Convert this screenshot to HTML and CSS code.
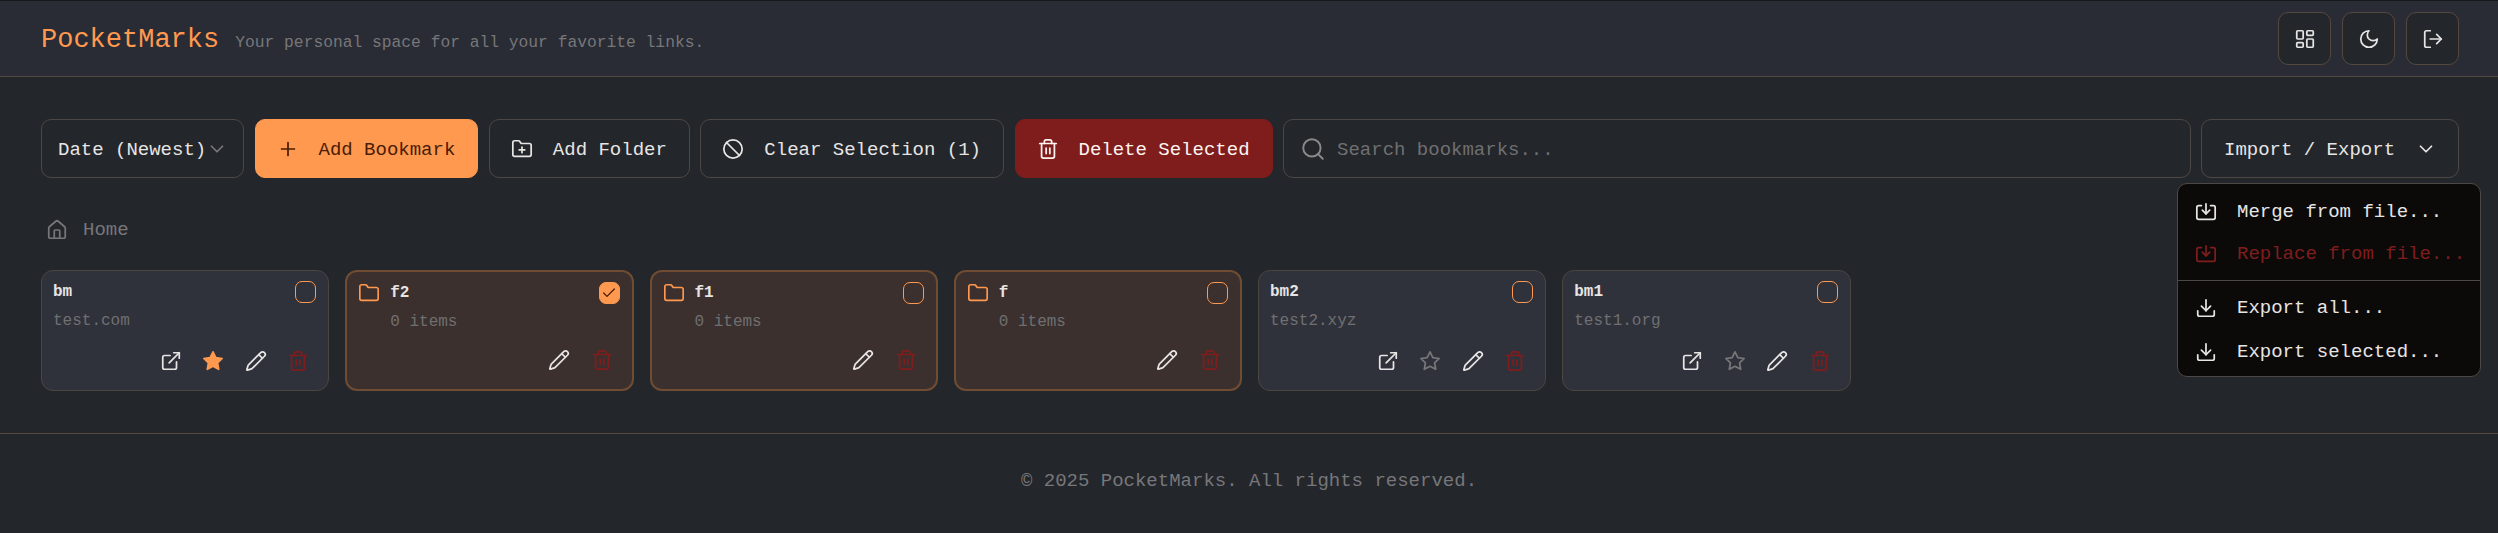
FILE: index.html
```html
<!DOCTYPE html>
<html lang="en">
<head>
    <meta charset="UTF-8">
    <meta name="viewport" content="width=device-width, initial-scale=1.0">
    <title>PocketMarks</title>
    <link rel="stylesheet" href="styles.css">
</head>
<body>
    <svg class="sprite" aria-hidden="true">
        <symbol id="i-dash" viewBox="0 0 24 24"><rect x="3" y="3" width="7" height="9" rx="1"/><rect x="14" y="3" width="7" height="5" rx="1"/><rect x="14" y="12" width="7" height="9" rx="1"/><rect x="3" y="16" width="7" height="5" rx="1"/></symbol>
        <symbol id="i-moon" viewBox="0 0 24 24"><path d="M12 3a6 6 0 0 0 9 9 9 9 0 1 1-9-9Z"/></symbol>
        <symbol id="i-logout" viewBox="0 0 24 24"><path d="M9 21H5a2 2 0 0 1-2-2V5a2 2 0 0 1 2-2h4"/><path d="m16 17 5-5-5-5"/><path d="M21 12H9"/></symbol>
        <symbol id="i-chevron" viewBox="0 0 24 24"><path d="m6 9 6 6 6-6"/></symbol>
        <symbol id="i-plus" viewBox="0 0 24 24"><path d="M5 12h14"/><path d="M12 5v14"/></symbol>
        <symbol id="i-folder-plus" viewBox="0 0 24 24"><path d="M12 10v6"/><path d="M9 13h6"/><path d="M20 20a2 2 0 0 0 2-2V8a2 2 0 0 0-2-2h-7.9a2 2 0 0 1-1.69-.9L9.6 3.9A2 2 0 0 0 7.93 3H4a2 2 0 0 0-2 2v13a2 2 0 0 0 2 2Z"/></symbol>
        <symbol id="i-ban" viewBox="0 0 24 24"><circle cx="12" cy="12" r="10"/><path d="m4.9 4.9 14.2 14.2"/></symbol>
        <symbol id="i-trash" viewBox="0 0 24 24"><path d="M3 6h18"/><path d="M19 6v14c0 1-1 2-2 2H7c-1 0-2-1-2-2V6"/><path d="M8 6V4c0-1 1-2 2-2h4c1 0 2 1 2 2v2"/><path d="M10 11v6"/><path d="M14 11v6"/></symbol>
        <symbol id="i-search" viewBox="0 0 24 24"><circle cx="11" cy="11" r="8"/><path d="m21 21-4.3-4.3"/></symbol>
        <symbol id="i-home" viewBox="0 0 24 24"><path d="M15 21v-8a1 1 0 0 0-1-1h-4a1 1 0 0 0-1 1v8"/><path d="M3 10a2 2 0 0 1 .709-1.528l7-5.999a2 2 0 0 1 2.582 0l7 5.999A2 2 0 0 1 21 10v9a2 2 0 0 1-2 2H5a2 2 0 0 1-2-2z"/></symbol>
        <symbol id="i-external" viewBox="0 0 24 24"><path d="M15 3h6v6"/><path d="M10 14 21 3"/><path d="M18 13v6a2 2 0 0 1-2 2H5a2 2 0 0 1-2-2V8a2 2 0 0 1 2-2h6"/></symbol>
        <symbol id="i-star" viewBox="0 0 24 24"><path d="M12 2l3.09 6.26L22 9.27l-5 4.87 1.18 6.88L12 17.77l-6.18 3.25L7 14.14 2 9.27l6.91-1.01L12 2z"/></symbol>
        <symbol id="i-pencil" viewBox="0 0 24 24"><path d="M21.174 6.812a1 1 0 0 0-3.986-3.987L3.842 16.174a2 2 0 0 0-.5.83l-1.321 4.352a.5.5 0 0 0 .623.622l4.353-1.32a2 2 0 0 0 .83-.497z"/><path d="m15 5 4 4"/></symbol>
        <symbol id="i-folder" viewBox="0 0 24 24"><path d="M20 20a2 2 0 0 0 2-2V8a2 2 0 0 0-2-2h-7.9a2 2 0 0 1-1.69-.9L9.6 3.9A2 2 0 0 0 7.93 3H4a2 2 0 0 0-2 2v13a2 2 0 0 0 2 2Z"/></symbol>
        <symbol id="i-check" viewBox="0 0 24 24"><path d="M20 6 9 17l-5-5"/></symbol>
        <symbol id="i-import" viewBox="0 0 24 24"><path d="M7 5H4a2 2 0 0 0-2 2v11a2 2 0 0 0 2 2h16a2 2 0 0 0 2-2V7a2 2 0 0 0-2-2h-3"/><path d="M12 3v11"/><path d="m8 10 4 4 4-4"/></symbol>
        <symbol id="i-download" viewBox="0 0 24 24"><path d="M21 15v4a2 2 0 0 1-2 2H5a2 2 0 0 1-2-2v-4"/><path d="m7 10 5 5 5-5"/><path d="M12 15V3"/></symbol>
    </svg>

    <header class="topbar">
        <div class="brand">
            <h1>PocketMarks</h1>
            <span class="tagline">Your personal space for all your favorite links.</span>
        </div>
        <div class="top-actions">
            <button class="square-btn"><svg class="icon"><use href="#i-dash"/></svg></button>
            <button class="square-btn"><svg class="icon"><use href="#i-moon"/></svg></button>
            <button class="square-btn"><svg class="icon"><use href="#i-logout"/></svg></button>
        </div>
    </header>

    <main class="content">
        <div class="toolbar">
            <button class="btn sort-btn">Date (Newest)<svg class="icon muted-icon"><use href="#i-chevron"/></svg></button>
            <button class="btn btn-primary"><svg class="icon"><use href="#i-plus"/></svg>Add Bookmark</button>
            <button class="btn"><svg class="icon"><use href="#i-folder-plus"/></svg>Add Folder</button>
            <button class="btn"><svg class="icon"><use href="#i-ban"/></svg>Clear Selection (1)</button>
            <button class="btn btn-danger"><svg class="icon"><use href="#i-trash"/></svg>Delete Selected</button>
            <div class="search">
                <svg class="icon search-icon"><use href="#i-search"/></svg>
                <span>Search bookmarks...</span>
            </div>
            <div class="dropdown">
                <button class="btn">Import / Export<svg class="icon"><use href="#i-chevron"/></svg></button>
                <div class="menu">
                    <div class="menu-item"><svg class="icon"><use href="#i-import"/></svg>Merge from file...</div>
                    <div class="menu-item menu-danger"><svg class="icon"><use href="#i-import"/></svg>Replace from file...</div>
                    <div class="menu-sep"></div>
                    <div class="menu-item"><svg class="icon"><use href="#i-download"/></svg>Export all...</div>
                    <div class="menu-item"><svg class="icon"><use href="#i-download"/></svg>Export selected...</div>
                </div>
            </div>
        </div>

        <nav class="crumbs">
            <svg class="icon"><use href="#i-home"/></svg>
            <span>Home</span>
        </nav>

        <div class="grid">
            <div class="card">
                <div class="card-top">
                    <div class="card-title">bm</div>
                    <span class="check"></span>
                </div>
                <div class="card-sub">test.com</div>
                <div class="card-actions">
                    <svg class="icon"><use href="#i-external"/></svg>
                    <svg class="icon star-on"><use href="#i-star"/></svg>
                    <svg class="icon"><use href="#i-pencil"/></svg>
                    <svg class="icon trash"><use href="#i-trash"/></svg>
                </div>
            </div>
            <div class="card folder">
                <div class="card-top">
                    <div class="card-title"><svg class="icon folder-icon"><use href="#i-folder"/></svg>f2</div>
                    <span class="check checked"><svg class="icon"><use href="#i-check"/></svg></span>
                </div>
                <div class="card-sub">0 items</div>
                <div class="card-actions">
                    <svg class="icon"><use href="#i-pencil"/></svg>
                    <svg class="icon trash"><use href="#i-trash"/></svg>
                </div>
            </div>
            <div class="card folder">
                <div class="card-top">
                    <div class="card-title"><svg class="icon folder-icon"><use href="#i-folder"/></svg>f1</div>
                    <span class="check"></span>
                </div>
                <div class="card-sub">0 items</div>
                <div class="card-actions">
                    <svg class="icon"><use href="#i-pencil"/></svg>
                    <svg class="icon trash"><use href="#i-trash"/></svg>
                </div>
            </div>
            <div class="card folder">
                <div class="card-top">
                    <div class="card-title"><svg class="icon folder-icon"><use href="#i-folder"/></svg>f</div>
                    <span class="check"></span>
                </div>
                <div class="card-sub">0 items</div>
                <div class="card-actions">
                    <svg class="icon"><use href="#i-pencil"/></svg>
                    <svg class="icon trash"><use href="#i-trash"/></svg>
                </div>
            </div>
            <div class="card">
                <div class="card-top">
                    <div class="card-title">bm2</div>
                    <span class="check"></span>
                </div>
                <div class="card-sub">test2.xyz</div>
                <div class="card-actions">
                    <svg class="icon"><use href="#i-external"/></svg>
                    <svg class="icon star-off"><use href="#i-star"/></svg>
                    <svg class="icon"><use href="#i-pencil"/></svg>
                    <svg class="icon trash"><use href="#i-trash"/></svg>
                </div>
            </div>
            <div class="card">
                <div class="card-top">
                    <div class="card-title">bm1</div>
                    <span class="check"></span>
                </div>
                <div class="card-sub">test1.org</div>
                <div class="card-actions">
                    <svg class="icon"><use href="#i-external"/></svg>
                    <svg class="icon star-off"><use href="#i-star"/></svg>
                    <svg class="icon"><use href="#i-pencil"/></svg>
                    <svg class="icon trash"><use href="#i-trash"/></svg>
                </div>
            </div>
        </div>
    </main>

    <footer class="footer">© 2025 PocketMarks. All rights reserved.</footer>
</body>
</html>
```

FILE: styles.css
```css
/* PocketMarks dark theme */
* {
    box-sizing: border-box;
}

body {
    margin: 0;
    height: 533px;
    overflow: hidden;
    background-color: #23262b;
    color: #e7e5e4;
    font-family: "Liberation Mono", monospace;
    font-size: 19px;
}

.sprite {
    display: none;
}

.icon {
    width: 22px;
    height: 22px;
    flex: none;
    fill: none;
    stroke: currentColor;
    stroke-width: 1.9;
    stroke-linecap: round;
    stroke-linejoin: round;
}

/* header */
.topbar {
    display: flex;
    justify-content: space-between;
    align-items: center;
    height: 77px;
    padding: 0 39px 0 41px;
    background-color: #292c34;
    border-top: 1px solid #17181b;
    border-bottom: 1px solid #57483f;
}

.brand {
    display: flex;
    align-items: baseline;
    gap: 16px;
    padding-top: 2px;
}

.brand h1 {
    margin: 0;
    font-size: 27px;
    font-weight: normal;
    color: #ff9950;
}

.tagline {
    font-size: 16.3px;
    color: #77777a;
}

.top-actions {
    display: flex;
    gap: 11px;
}

.square-btn {
    display: flex;
    justify-content: center;
    align-items: center;
    width: 53px;
    height: 53px;
    padding: 0;
    background-color: #23262b;
    border: 1px solid #57483f;
    border-radius: 10px;
    color: #e7e5e4;
}

/* toolbar */
.content {
    padding: 42px 39px 0 41px;
    height: 356px;
}

.toolbar {
    display: flex;
    gap: 10.5px;
    height: 59px;
}

.btn {
    display: flex;
    align-items: center;
    gap: 20px;
    height: 59px;
    padding: 2px 22px 0 21px;
    background-color: transparent;
    border: 1px solid #4d4843;
    border-radius: 10px;
    color: #e7e5e4;
    font-family: inherit;
    font-size: 19px;
    white-space: nowrap;
}

.btn .icon {
    margin-top: -2px;
}

.sort-btn {
    gap: 0;
    width: 203px;
    padding: 2px 10px 0 16px;
}

.muted-icon {
    color: #77777a;
}

.btn-primary {
    background-color: #ff9950;
    border-color: #ff9950;
    color: #4a1c04;
}

.btn-danger {
    background-color: #7f1d1d;
    border-color: #7f1d1d;
    color: #fdf4f0;
}

.search {
    flex: 1;
    display: flex;
    align-items: center;
    gap: 11px;
    padding: 2px 0 0 16px;
    border: 1px solid #4d4843;
    border-radius: 10px;
    color: #6f6f71;
}

.search-icon {
    width: 26px;
    height: 26px;
    margin-top: -2px;
    color: #8a8a8a;
    stroke-width: 1.8;
}

.dropdown {
    position: relative;
}

.dropdown .btn {
    width: 258px;
    padding-left: 22px;
}

/* menu floats over the page */
.menu {
    position: absolute;
    top: 64px;
    right: -22px;
    width: 304px;
    height: 194px;
    padding: 7px 0;
    background-color: #0c0a09;
    border: 1px solid #4d4843;
    border-radius: 10px;
    z-index: 5;
}

.menu-item {
    display: flex;
    align-items: center;
    gap: 20px;
    height: 42px;
    padding-left: 17px;
    white-space: nowrap;
}

.menu-item:last-child {
    margin-top: 1.5px;
}

.menu-danger {
    color: #7f1d1d;
}

.menu-sep {
    height: 1px;
    margin: 5px 0 6px;
    background-color: #4d4843;
}

/* breadcrumb */
.crumbs {
    display: flex;
    align-items: center;
    gap: 15px;
    height: 20px;
    margin-top: 42px;
    padding-left: 5px;
    color: #77777a;
}

/* cards */
.grid {
    display: grid;
    grid-template-columns: repeat(8, 1fr);
    gap: 16px;
    margin-top: 30px;
}

.card {
    display: flex;
    flex-direction: column;
    height: 121px;
    padding: 10px 12px 18px 11px;
    background-color: #2f323b;
    border: 1px solid #4a4640;
    border-radius: 12px;
}

.card.folder {
    background-color: #3b302e;
    border: 2px solid #704c33;
    padding: 10px 12px 18px 11px;
}

.card-top {
    display: flex;
    justify-content: space-between;
    align-items: center;
    height: 22px;
}

.card-title {
    display: flex;
    align-items: center;
    gap: 10px;
    font-size: 16px;
    font-weight: bold;
}

.folder-icon {
    color: #ff9950;
    stroke-width: 1.8;
}

.card-sub {
    margin-top: 9px;
    font-size: 16px;
    color: #6f6f71;
}

.folder .card-sub {
    padding-left: 32px;
}

.card-actions {
    display: flex;
    justify-content: flex-end;
    gap: 20.5px;
    margin-top: auto;
    padding-right: 7px;
}

.folder .card-actions {
    gap: 21px;
}

.check {
    display: flex;
    justify-content: center;
    align-items: center;
    width: 21px;
    height: 22px;
    border: 1px solid #ff9950;
    border-radius: 7px;
}

.check.checked {
    background-color: #ff9950;
    color: #4a1c04;
}

.check .icon {
    width: 16px;
    height: 16px;
}

.star-on {
    color: #ff9950;
    fill: #ff9950;
}

.star-off {
    color: #77777a;
}

.trash {
    color: #7f1d1d;
}

/* footer */
.footer {
    height: 100px;
    padding-top: 36px;
    border-top: 1px solid #57483f;
    text-align: center;
    color: #77777a;
}
```
